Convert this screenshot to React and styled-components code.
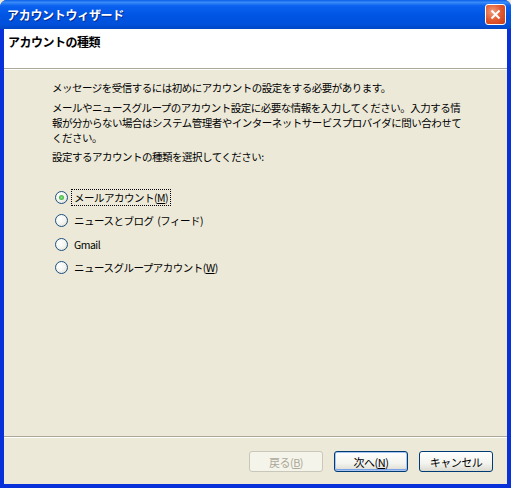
import React, { useState } from "react";
import styled, { createGlobalStyle } from "styled-components";

const GlobalStyle = createGlobalStyle`
  html, body {
    margin: 0;
    padding: 0;
    background: #ece9d8;
  }
  body {
    font-family: "Noto Sans CJK JP", "Liberation Sans", sans-serif;
    font-size: 12px;
  }
`;

const Frame = styled.div`
  width: 511px;
  height: 488px;
  box-sizing: border-box;
  display: flex;
  flex-direction: column;
  background: #0831d9;
  border-radius: 7px 7px 0 0;
  overflow: hidden;
`;

const TitleBar = styled.div`
  height: 29px;
  flex: none;
  display: flex;
  align-items: center;
  justify-content: space-between;
  padding: 0 5px 0 7px;
  background: linear-gradient(
    180deg,
    #0a5fe8 0%,
    #3a8cf8 8%,
    #0a61f0 20%,
    #0054e3 55%,
    #0050da 85%,
    #0046c4 100%
  );
`;

const TitleText = styled.span`
  color: #fff;
  font-size: 12px;
  font-weight: bold;
  letter-spacing: -0.3px;
  text-shadow: 1px 1px 0 #0a2c8c;
`;

const CloseButton = styled.div`
  width: 21px;
  height: 21px;
  box-sizing: border-box;
  border: 1px solid #fff;
  border-radius: 3px;
  background: radial-gradient(circle at 35% 35%, #f0a080 0%, #e2582e 50%, #c63a18 100%);
  display: flex;
  align-items: center;
  justify-content: center;
`;

const Body = styled.div`
  flex: 1;
  margin: 0 4px 4px 4px;
  display: flex;
  flex-direction: column;
  background: #ece9d8;
`;

const Header = styled.div`
  height: 40px;
  flex: none;
  background: #fff;
  padding: 4px 0 0 4px;
  box-sizing: border-box;
  border-bottom: 1px solid #aca899;
  box-shadow: 0 1px 0 #fff;
`;

const HeaderTitle = styled.div`
  font-weight: bold;
  font-size: 12px;
  letter-spacing: -0.5px;
  color: #000;
  line-height: 18px;
`;

const Content = styled.div`
  flex: 1;
  padding: 11px 30px 0 48px;
  color: #000;
  font-size: 10.5px;
  letter-spacing: -0.5px;
`;

const Para = styled.p`
  margin: 0 0 ${(p) => p.$after ?? 5}px 0;
  line-height: 15px;
`;

const RadioList = styled.div`
  display: flex;
  flex-direction: column;
  gap: 5.5px;
  margin-top: 24px;
  padding-left: 3px;
`;

const RadioRow = styled.label`
  display: flex;
  align-items: center;
  gap: 3px;
  height: 18px;
  cursor: default;
`;

const RadioCircle = styled.span`
  width: 13px;
  height: 13px;
  flex: none;
  box-sizing: border-box;
  border-radius: 50%;
  border: 1px solid #1c5180;
  background: radial-gradient(circle at 35% 35%, #fff 0%, #f4f4f0 50%, #d6d4c8 100%);
  display: flex;
  align-items: center;
  justify-content: center;

  &::after {
    content: "";
    width: 5px;
    height: 5px;
    border-radius: 50%;
    background: ${(p) => (p.$checked ? "radial-gradient(circle, #8ae28a 0%, #21a121 100%)" : "transparent")};
  }
`;

const RadioLabel = styled.span`
  padding: 0 2px;
  line-height: 15px;
  border: 1px dotted ${(p) => (p.$focused ? "#000" : "transparent")};
`;

const Footer = styled.div`
  height: 48px;
  flex: none;
  border-top: 1px solid #aca899;
  box-shadow: inset 0 1px 0 #fff;
  display: flex;
  align-items: flex-start;
  justify-content: flex-end;
  gap: 11px;
  padding: 14px 14px 0 0;
  box-sizing: border-box;
`;

const Button = styled.button`
  width: 74px;
  height: 21px;
  box-sizing: border-box;
  font-family: inherit;
  font-size: 11px;
  letter-spacing: -0.5px;
  padding: 0;
  border-radius: 3px;
  border: 1px solid ${(p) => (p.disabled ? "#c9c7ba" : "#003c74")};
  color: ${(p) => (p.disabled ? "#aca899" : "#000")};
  background: ${(p) =>
    p.disabled ? "#f5f4ea" : "linear-gradient(180deg, #fff 0%, #f3f3ef 60%, #dcdad0 100%)"};
  box-shadow: ${(p) => (p.$default ? "inset 0 0 0 1px #a8c4f0, inset 0 -1px 0 1px #7ba2e7" : "none")};
`;

const Key = styled.span`
  text-decoration: underline;
`;

const options = [
  <>メールアカウント(<Key>M</Key>)</>,
  <>ニュースとブログ&nbsp;&nbsp;(フィード)</>,
  <>Gmail</>,
  <>ニュースグループアカウント(<Key>W</Key>)</>,
];

export default function App() {
  const [selected, setSelected] = useState(0);

  return (
    <>
      <GlobalStyle />
      <Frame>
        <TitleBar>
          <TitleText>アカウントウィザード</TitleText>
          <CloseButton>
            <svg width="11" height="11" viewBox="0 0 11 11">
              <path d="M1.5 1.5 L9.5 9.5 M9.5 1.5 L1.5 9.5" stroke="#fff" strokeWidth="2" />
            </svg>
          </CloseButton>
        </TitleBar>
        <Body>
          <Header>
            <HeaderTitle>アカウントの種類</HeaderTitle>
          </Header>
          <Content>
            <Para>メッセージを受信するには初めにアカウントの設定をする必要があります。</Para>
            <Para $after={4}>
              メールやニュースグループのアカウント設定に必要な情報を入力してください。入力する情
              <br />
              報が分からない場合はシステム管理者やインターネットサービスプロバイダに問い合わせて
              <br />
              ください。
            </Para>
            <Para>設定するアカウントの種類を選択してください:</Para>
            <RadioList>
              {options.map((label, i) => (
                <RadioRow key={i} onClick={() => setSelected(i)}>
                  <RadioCircle $checked={selected === i} />
                  <RadioLabel $focused={selected === i}>{label}</RadioLabel>
                </RadioRow>
              ))}
            </RadioList>
          </Content>
          <Footer>
            <Button disabled>戻る(<Key>B</Key>)</Button>
            <Button $default>次へ(<Key>N</Key>)</Button>
            <Button>キャンセル</Button>
          </Footer>
        </Body>
      </Frame>
    </>
  );
}
